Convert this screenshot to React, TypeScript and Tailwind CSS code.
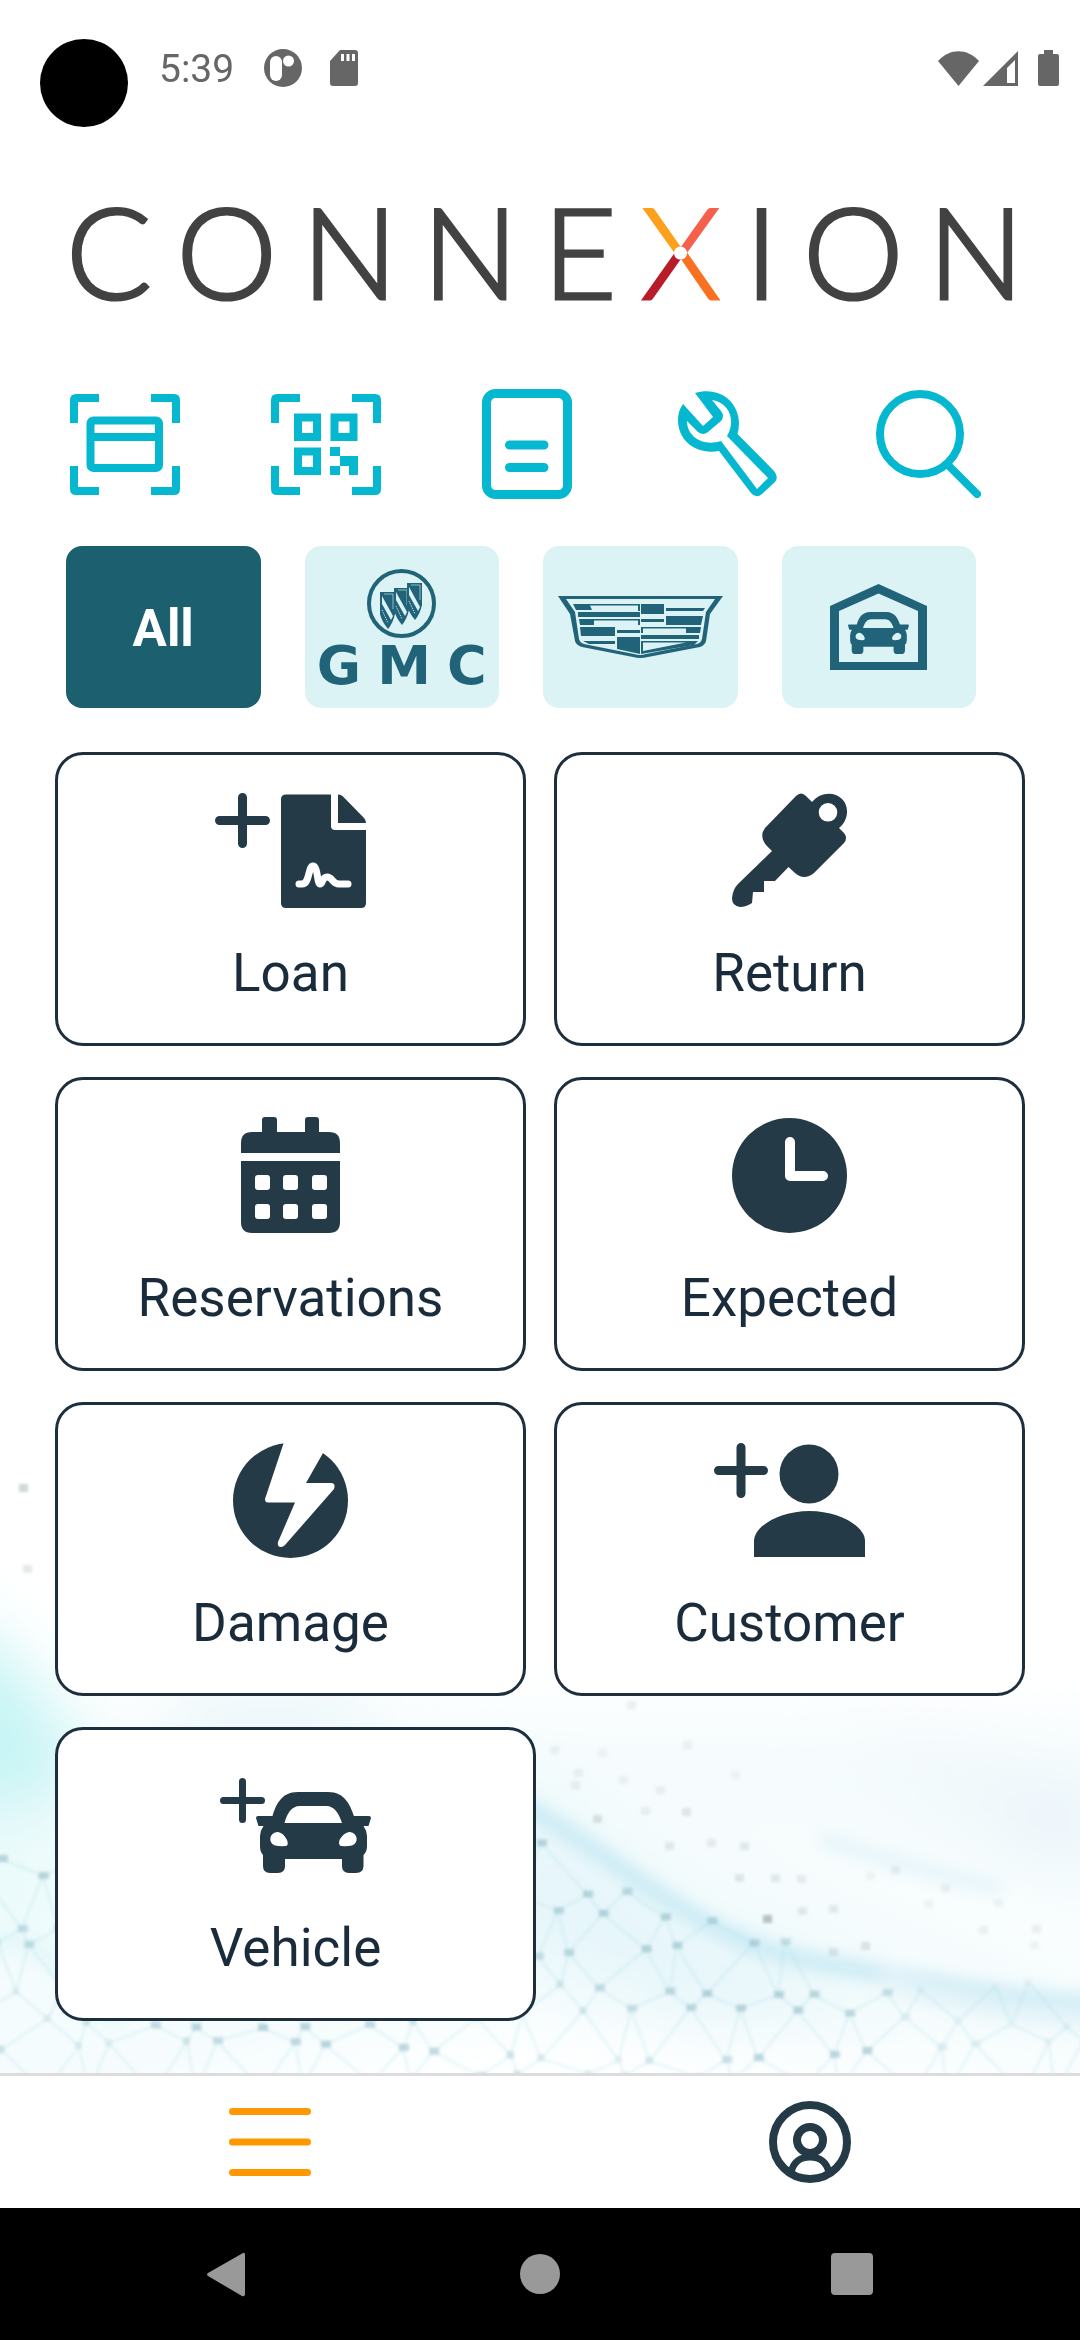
import type { ReactNode } from "react";

const TEAL = "#06b8cf";
const INK = "#253a47";
const BRAND = "#21647a";

function Svg({ w, h, children }: { w: number; h: number; children: ReactNode }) {
  return (
    <svg width={w} height={h} viewBox={`0 0 ${w} ${h}`} fill="none" aria-hidden="true">
      {children}
    </svg>
  );
}

/* ---------- status bar ---------- */

function StatusBar() {
  return (
    <header className="relative flex h-[136px] items-center justify-between pr-[21px] pl-[159px] text-[#666666]">
      <span className="absolute top-[39px] left-10 size-[88px] rounded-full bg-black" />
      <div className="flex items-center">
        <span className="pt-0.5 text-[39px] leading-[44px]">5:39</span>
        <span className="ml-[30px] flex items-center gap-7">
          <Svg w={38} h={38}>
            <circle cx="19" cy="19" r="19" fill="#666" />
            <rect x="6" y="7" width="12" height="25" rx="6" fill="#fff" />
            <circle cx="24.500" cy="12" r="5.500" fill="#fff" />
          </Svg>
          <Svg w={28} h={36}>
            <path d="M10 0H25Q28 0 28 3V33Q28 36 25 36H3Q0 36 0 33V11Z" fill="#666" />
            <path d="M12.500 4V11M18 4V11M23.500 4V11" stroke="#fff" strokeWidth="3" />
          </Svg>
        </span>
      </div>
      <div className="flex items-center">
        <Svg w={41} h={35}>
          <path d="M0 10C12 -3 29 -3 41 10L20.500 35Z" fill="#666" />
        </Svg>
        <span className="ml-1">
          <Svg w={35} h={35}>
            <path d="M35 0V35H0ZM32 9L24 17V32H32Z" fill="#666" fillRule="evenodd" />
          </Svg>
        </span>
        <span className="ml-5">
          <Svg w={21} h={36}>
            <path d="M6 0H15V4H19Q21 4 21 6V34Q21 36 19 36H2Q0 36 0 34V6Q0 4 2 4H6Z" fill="#666" />
          </Svg>
        </span>
      </div>
    </header>
  );
}

/* ---------- word mark ---------- */

function WordMark() {
  return (
    <h1
      aria-label="CONNEXION"
      className="flex h-[236px] items-center justify-between pr-[56px] pb-2 pl-[66px] font-['Lato'] text-[127px] leading-[156px] font-light text-[#424242] [-webkit-text-stroke:3px_#424242]"
    >
      <span>C</span>
      <span>O</span>
      <span>N</span>
      <span>N</span>
      <span>E</span>
      <span className="bg-[radial-gradient(circle_at_50%_52%,#fff_6px,transparent_7px),conic-gradient(from_0deg_at_50%_52%,#f4604a_90deg,#f97020_90deg_180deg,#b71c28_180deg_270deg,#fda11c_270deg)] bg-clip-text text-transparent [-webkit-text-stroke:3px_transparent]">
        X
      </span>
      <span>I</span>
      <span>O</span>
      <span>N</span>
    </h1>
  );
}

/* ---------- quick actions ---------- */

const frame =
  "M4 29V6Q4 4 6 4H29M81 4H104Q106 4 106 6V29M106 72V95Q106 97 104 97H81M29 97H6Q4 97 4 95V72";

const quickActions: { label: string; icon: ReactNode }[] = [
  {
    label: "Scan card",
    icon: (
      <Svg w={110} h={101}>
        <path d={frame} stroke={TEAL} strokeWidth="8" />
        <rect x="20.500" y="26.500" width="68.500" height="47.500" rx="3" stroke={TEAL} strokeWidth="8" />
        <path d="M20 43H90" stroke={TEAL} strokeWidth="8" />
      </Svg>
    ),
  },
  {
    label: "Scan QR code",
    icon: (
      <Svg w={110} h={101}>
        <path d={frame} stroke={TEAL} strokeWidth="8" />
        <path
          d="M27 23.500H46V43H27ZM63.500 23.500H82.500V43H63.500ZM27 57.500H46V77H27Z"
          stroke={TEAL}
          strokeWidth="8"
        />
        <path d="M59 53H69V62H87V81H78V72H69V81H59V72H69V62H59Z" fill={TEAL} />
      </Svg>
    ),
  },
  {
    label: "Documents",
    icon: (
      <Svg w={90} h={110}>
        <rect x="4.500" y="4.500" width="81" height="101" rx="9" stroke={TEAL} strokeWidth="9" />
        <path d="M27.500 56H62M27.500 78.500H62" stroke={TEAL} strokeWidth="9" strokeLinecap="round" />
      </Svg>
    ),
  },
  {
    label: "Service",
    icon: (
      <Svg w={99} h={108}>
        <path
          fillRule="evenodd"
          fill={TEAL}
          d="M17 3C42 -4 60 12 61 32Q61 39 59.500 44L96 81Q101 87 97 92L84 104Q78 109 73 103L41 61C18 65 0 51 0 30Q0 21 5 14L25 36L35 27ZM34 10L43 21Q47 26 43 31L30 42Q25 46 20 42L9 31C9 46 24 57 43 51L79 99L90 88L49 46C58 31 52 13 34 10Z"
        />
      </Svg>
    ),
  },
  {
    label: "Search",
    icon: (
      <Svg w={105} h={108}>
        <circle cx="44" cy="44" r="40" stroke={TEAL} strokeWidth="8" />
        <path d="M72 75L101 104" stroke={TEAL} strokeWidth="8" strokeLinecap="round" />
      </Svg>
    ),
  },
];

/* ---------- filters ---------- */

const CAR =
  "M16.500 24C20 13 25 0 42 0H72C89 0 94 13 98 24H113Q115 24 115 26L112.500 34H107.500Q111 39 111 44V54Q111 60 107.500 63V74Q107.500 81 100 81H93Q86 81 86 74V67H29V74Q29 81 22 81H14Q7 81 7 74V63Q4 60 4 54V44Q4 39 7.500 34H2.500L0 26Q0 24 2 24ZM28.500 31H86C83 22 79 14 70 14H44C35 14 31 22 28.500 31ZM21 40C13 41 12 51 19 53.500Q24 54.500 30 54Q33 53 31 48C28 42 24 40 21 40ZM94 40C91 40 87 42 83.500 48Q82 53 85 54Q91 54.500 96 53.500C103 51 102 41 94 40Z";

function BuickGmc() {
  const shields: [number, number][] = [
    [13, 23],
    [27, 19],
    [40, 14],
  ];
  return (
    <span className="flex flex-col items-center">
      <Svg w={69} h={69}>
        <circle cx="34.500" cy="34.500" r="32.500" stroke={BRAND} strokeWidth="4" />
        {shields.map(([x, y]) => (
          <g key={x} transform={`translate(${x} ${y})`}>
            <path d="M0 0H15V22Q13 31 8 37Q2 30 0 22Z" fill={BRAND} />
            <path d="M2 4L13 24L11 28L2 12Z" fill="#dcf3f5" />
            <path d="M2 18L8 31" stroke="#dcf3f5" strokeWidth="1" strokeDasharray="1 1" />
            <path d="M4 2H13V17" stroke="#dcf3f5" strokeWidth="1" opacity=".6" />
          </g>
        ))}
      </Svg>
      <span className="mt-2 flex w-[170px] justify-between font-['DejaVu_Sans'] text-[54px] leading-10 font-bold text-[#21647a]">
        <span>G</span>
        <span>M</span>
        <span>C</span>
      </span>
    </span>
  );
}

function Crest() {
  return (
    <Svg w={165} h={63}>
      <path
        fillRule="evenodd"
        fill={BRAND}
        d="M0 0H165L152 18L148 45Q147 49 142 51L90 61Q82 63 75 61L24 51Q18 49 17 45L12 18ZM8 3L17 16L21 43Q22 47 26 48L76 58Q82 60 88 58L139 48Q143 47 144 43L148 16L157 3Z"
      />
      <g fill={BRAND}>
        <path d="M15 8H82V15H80V9.500H32L34 14H18Z" />
        <path d="M83 8H106V18H83ZM108 12H147L145 15H108ZM20 16H82V21H20ZM21 23H82V29H80V24.500H36V29H22ZM83 23H106V26H83ZM108 20H145L143 29H108ZM22 31H57V40H23ZM59 34H82V37H59ZM83 31H143L142 37H128V32.500H85V37H83ZM83 39H141V43H83ZM25 45H57V48H31ZM59 41H82V58L59 53Z" />
        <path d="M83 45H140L136 49L83 58ZM85 46.500V55L128 46.500Z" fillRule="evenodd" />
      </g>
    </Svg>
  );
}

function Garage() {
  return (
    <Svg w={97} h={86}>
      <path
        fillRule="evenodd"
        fill={BRAND}
        d="M0 22L48.500 0L97 22V86H0ZM9 27V78H88V27L48.500 9.500Z"
      />
      <path d={CAR} fill={BRAND} fillRule="evenodd" transform="translate(18 28) scale(.53 .52)" />
    </Svg>
  );
}

const filters: { label: string; content: ReactNode; active?: boolean }[] = [
  { label: "All", content: "All", active: true },
  { label: "Buick GMC", content: <BuickGmc /> },
  { label: "Cadillac", content: <Crest /> },
  { label: "Garage", content: <Garage /> },
];

/* ---------- menu cards ---------- */

type Item = { label: string; icon: ReactNode };

const items: Item[] = [
  {
    label: "Loan",
    icon: (
      <Svg w={151} h={115}>
        <path d="M4.500 27.500H50.500M27.500 4.500V50.500" stroke={INK} strokeWidth="9" strokeLinecap="round" />
        <path
          d="M71 1.500H116V33Q116 37 120 37H151V110Q151 115 146 115H71Q66 115 66 110V6.500Q66 1.500 71 1.500ZM123 1.500Q126 1.500 128 3.500L149 25Q151 27 151 30H123Z"
          fill={INK}
        />
        <path
          d="M84 91H87C95 91 93 73 98 73C103 73 102 91 105 91C108 91 107 84 112 84C118 84 117 91 124 91H133"
          stroke="#fff"
          strokeWidth="7"
          strokeLinecap="round"
          strokeLinejoin="round"
        />
      </Svg>
    ),
  },
  {
    label: "Return",
    icon: (
      <Svg w={115} h={115}>
        <path
          fill={INK}
          fillRule="evenodd"
          d="M64 3Q69 -2 74 3L80 9C88 -1 102 -2 110 6C118 14 116 28 107 35L112 40Q116 45 112 50L82 80Q72 88 63 80L56.500 74L43 88H32V99H21L20 110Q14 114 8 114Q0 113 0 105Q1 96 6 91L40 58L34 52Q27 43 33 35ZM96 10A9.300 9.300 0 1 0 96 28.600A9.300 9.300 0 1 0 96 10Z"
        />
      </Svg>
    ),
  },
  {
    label: "Reservations",
    icon: (
      <Svg w={99} h={116}>
        <path
          fill={INK}
          d="M0 36V26Q0 15 11 15H21V3Q21 0 24 0H33Q36 0 36 3V15H64V3Q64 0 67 0H75Q78 0 78 3V15H88Q99 15 99 26V36ZM0 44H99V105Q99 116 88 116H11Q0 116 0 105Z"
        />
        {[14, 42, 71].map((x) =>
          [58, 87].map((y) => <rect key={`${x}-${y}`} x={x} y={y} width="15" height="15" rx="3" fill="#fff" />),
        )}
      </Svg>
    ),
  },
  {
    label: "Expected",
    icon: (
      <Svg w={115} h={115}>
        <circle cx="57.500" cy="57.500" r="57.500" fill={INK} />
        <path
          d="M58 24V58H91"
          stroke="#fff"
          strokeWidth="10"
          strokeLinecap="round"
          strokeLinejoin="round"
        />
      </Svg>
    ),
  },
  {
    label: "Damage",
    icon: (
      <Svg w={115} h={115}>
        <circle cx="57.500" cy="57.500" r="57.500" fill={INK} />
        <path
          fill="#fff"
          d="M51 -1L32 56Q32 59.500 35 59.500H62L45 99Q44 104 48 104Q50 104 52 102L101 46Q103 40 98 40H73L90 10L92 9L97 0Z"
        />
      </Svg>
    ),
  },
  {
    label: "Customer",
    icon: (
      <Svg w={151} h={115}>
        <path d="M4.500 27.500H49.500M27 4.500V50.500" stroke={INK} strokeWidth="9" strokeLinecap="round" />
        <circle cx="95" cy="31" r="29.500" fill={INK} />
        <path d="M40 114V98C40 83 66 68 95.500 68C125 68 151 83 151 98V114Z" fill={INK} />
      </Svg>
    ),
  },
];

const vehicle: Item = {
  label: "Vehicle",
  icon: (
    <Svg w={151} h={95}>
      <path d="M3.500 22.500H41.500M22.500 3.500V41.500" stroke={INK} strokeWidth="7" strokeLinecap="round" />
      <path d={CAR} fill={INK} fillRule="evenodd" transform="translate(36 14)" />
    </Svg>
  ),
};

function MenuCard({ label, icon }: Item) {
  return (
    <button
      type="button"
      className="flex h-[294px] flex-col items-center rounded-[28px] border-[3px] border-[#1d2f3f] bg-white pt-[37px] text-[#1a2c3c]"
    >
      <span className="flex h-[116px] items-center">{icon}</span>
      <span className="mt-[33px] text-[53px] leading-[64px]">{label}</span>
    </button>
  );
}

/* ---------- network backdrop ---------- */

const ridge = (x: number) => (x < 540 ? 440 - x * 0.02 : 430 + 195 * (1 - Math.exp(-(x - 540) / 260)));

const mesh: { x: number; y: number; d: number }[][] = [];
for (let r = 0; r < 13; r++) {
  const row: { x: number; y: number; d: number }[] = [];
  for (let c = 0; c < 22; c++) {
    row.push({
      x: c * 54 + (r % 2) * 27 + Math.sin(r * 7.3 + c * 3.1) * 12 - 14,
      y: 305 + r * 33 + Math.cos(r * 2.7 + c * 5.9) * 10,
      d: Math.abs(Math.sin(r * 12.9 + c * 78.2)),
    });
  }
  mesh.push(row);
}
const lines: string[] = [];
mesh.forEach((row, r) =>
  row.forEach((p, c) => {
    if (p.y < ridge(p.x)) return;
    const down = mesh[r + 1]?.[c];
    const diag = mesh[r + 1]?.[r % 2 ? c + 1 : c - 1];
    if (down) lines.push(`M${p.x} ${p.y}L${down.x} ${down.y}`);
    if (diag) lines.push(`M${p.x} ${p.y}L${diag.x} ${diag.y}`);
  }),
);

const loose: [number, number, number][] = [
  [23, 105, 0.4], [27, 186, 0.22], [631, 322, 0.14], [687, 362, 0.12], [602, 370, 0.1], [554, 367, 0.12],
  [578, 390, 0.14], [575, 402, 0.14], [623, 397, 0.12], [660, 407, 0.14], [735, 392, 0.1], [597, 436, 0.28],
  [645, 428, 0.14], [686, 429, 0.22], [669, 463, 0.2], [711, 460, 0.18], [744, 463, 0.2], [739, 495, 0.22],
  [775, 495, 0.2], [801, 496, 0.16], [767, 536, 0.6], [802, 528, 0.2], [833, 526, 0.2], [865, 563, 0.25],
  [833, 569, 0.22], [870, 493, 0.1], [895, 487, 0.14], [945, 505, 0.12], [928, 521, 0.1], [998, 520, 0.1],
  [983, 547, 0.12], [1036, 546, 0.14], [1034, 562, 0.1],
];

function Backdrop() {
  return (
    <svg
      className="absolute inset-x-0 bottom-0 h-[690px] w-full"
      viewBox="0 0 1080 690"
      preserveAspectRatio="none"
      aria-hidden="true"
    >
      <defs>
        <filter id="haze" x="-50%" y="-50%" width="200%" height="200%">
          <feGaussianBlur stdDeviation="32" />
        </filter>
        <filter id="soft" x="-20%" y="-20%" width="140%" height="140%">
          <feGaussianBlur stdDeviation="8" />
        </filter>
        <filter id="dot">
          <feGaussianBlur stdDeviation="1.5" />
        </filter>
      </defs>
      <g filter="url(#haze)">
        <path d="M-60 270L60 330L200 320L1140 340V560L560 380L1140 600V700L500 640L-60 760Z" fill="#f5fcfd" />
        <path d="M-60 220L20 280L80 370L60 420L-60 430Z" fill="#c6f4f5" />
        <path d="M-60 440H60V560H-60Z" fill="#eafafb" />
        <path d="M180 320H360V350H180Z" fill="#d9eff6" />
        <path d="M520 400L700 540L900 620L700 640L480 560Z" fill="#e6f6fa" />
        <path d="M840 330L1100 400V490L960 440Z" fill="#f1f8fb" />
        <path d="M1010 420H1110V460H1010Z" fill="#e6f2fa" />
      </g>
      <g filter="url(#soft)" fill="none">
        <path d="M520 420C640 490 700 560 820 580S1000 615 1100 622" stroke="#c9eaf4" strokeWidth="17" />
        <path d="M820 455C880 475 930 490 1000 505" stroke="#e1f3f9" strokeWidth="12" />
        <path d="M880 595C950 622 1020 630 1100 636" stroke="#e4f4f9" strokeWidth="22" />
        <path d="M-10 560C40 545 60 590 120 640" stroke="#e6f8fa" strokeWidth="20" />
      </g>
      <g filter="url(#dot)">
        <path d={lines.join("")} stroke="#9fdce8" strokeWidth="3" opacity=".2" fill="none" />
        {mesh.flat().map((p) =>
          p.y > ridge(p.x) ? (
            <rect
              key={`${p.x}`}
              x={p.x - 4}
              y={p.y - 4}
              width={p.d > 0.6 ? 10 : 7}
              height="7"
              fill="#7aa9b8"
              opacity={(0.1 + p.d * 0.35) * (p.x > 900 ? 0.4 : 1)}
            />
          ) : null,
        )}
        {loose.map(([x, y, o]) => (
          <rect key={`${x}-${y}`} x={x - 4} y={y - 4} width="9" height="8" fill="#8a9da3" opacity={o} />
        ))}
      </g>
    </svg>
  );
}

/* ---------- page ---------- */

export default function App() {
  return (
    <div className="flex min-h-screen flex-col bg-white font-['Roboto',sans-serif]">
      <main className="relative flex grow flex-col">
        <Backdrop />
        <div className="relative">
          <StatusBar />
          <WordMark />

          <section aria-label="Quick actions" className="grid h-[144px] grid-cols-5 pr-[51px] pl-6">
            {quickActions.map((a) => (
              <button key={a.label} type="button" aria-label={a.label} className="flex items-center justify-center">
                {a.icon}
              </button>
            ))}
          </section>

          <section aria-label="Filters" className="mt-[30px] grid grid-cols-4 gap-11 pr-[104px] pl-[66px]">
            {filters.map((f) => (
              <button
                key={f.label}
                type="button"
                aria-label={f.label}
                aria-pressed={!!f.active}
                className={
                  f.active
                    ? "flex h-[162px] items-center justify-center rounded-2xl bg-[#1c6070] pt-1 text-[51px] leading-[58px] font-bold text-white"
                    : "flex h-[162px] items-center justify-center rounded-2xl bg-[#dcf3f5]"
                }
              >
                {f.content}
              </button>
            ))}
          </section>

          <section aria-label="Menu" className="mt-11 mb-[51px] flex flex-col gap-[31px] px-[55px]">
            <div className="grid grid-cols-2 gap-x-7 gap-y-[31px]">
              {items.map((i) => (
                <MenuCard key={i.label} {...i} />
              ))}
            </div>
            <div className="grid grid-cols-2 gap-2">
              <MenuCard {...vehicle} />
            </div>
          </section>
        </div>
      </main>

      <nav aria-label="Main" className="grid h-[135px] grid-cols-2 border-t-[3px] border-[#dcdcdc] bg-white">
        <button type="button" aria-label="Menu" className="flex items-center justify-center">
          <Svg w={82} h={68}>
            <path d="M3.500 3.500H78.500M3.500 34H78.500M3.500 64.500H78.500" stroke="#ff9800" strokeWidth="7" strokeLinecap="round" />
          </Svg>
        </button>
        <button type="button" aria-label="Profile" className="flex items-center justify-center">
          <Svg w={82} h={82}>
            <circle cx="41" cy="41" r="37" stroke={INK} strokeWidth="8" />
            <circle cx="41" cy="39" r="13" stroke={INK} strokeWidth="8" />
            <path d="M22 72C24 61 32 56 41 56S58 61 60 72" stroke={INK} strokeWidth="7" />
          </Svg>
        </button>
      </nav>

      <footer className="grid h-[132px] grid-cols-3 bg-black px-[72px]">
        <button type="button" aria-label="Back" className="flex items-center justify-center">
          <Svg w={42} h={45}>
            <path d="M36 1Q38 0 38 3V42Q38 45 35 44L1 24Q-1 22.500 1 21Z" fill="#999" />
          </Svg>
        </button>
        <button type="button" aria-label="Home" className="flex items-center justify-center">
          <span className="size-10 rounded-full bg-[#999]" />
        </button>
        <button type="button" aria-label="Recents" className="flex items-center justify-center">
          <span className="size-[42px] rounded-[4px] bg-[#999]" />
        </button>
      </footer>
    </div>
  );
}
